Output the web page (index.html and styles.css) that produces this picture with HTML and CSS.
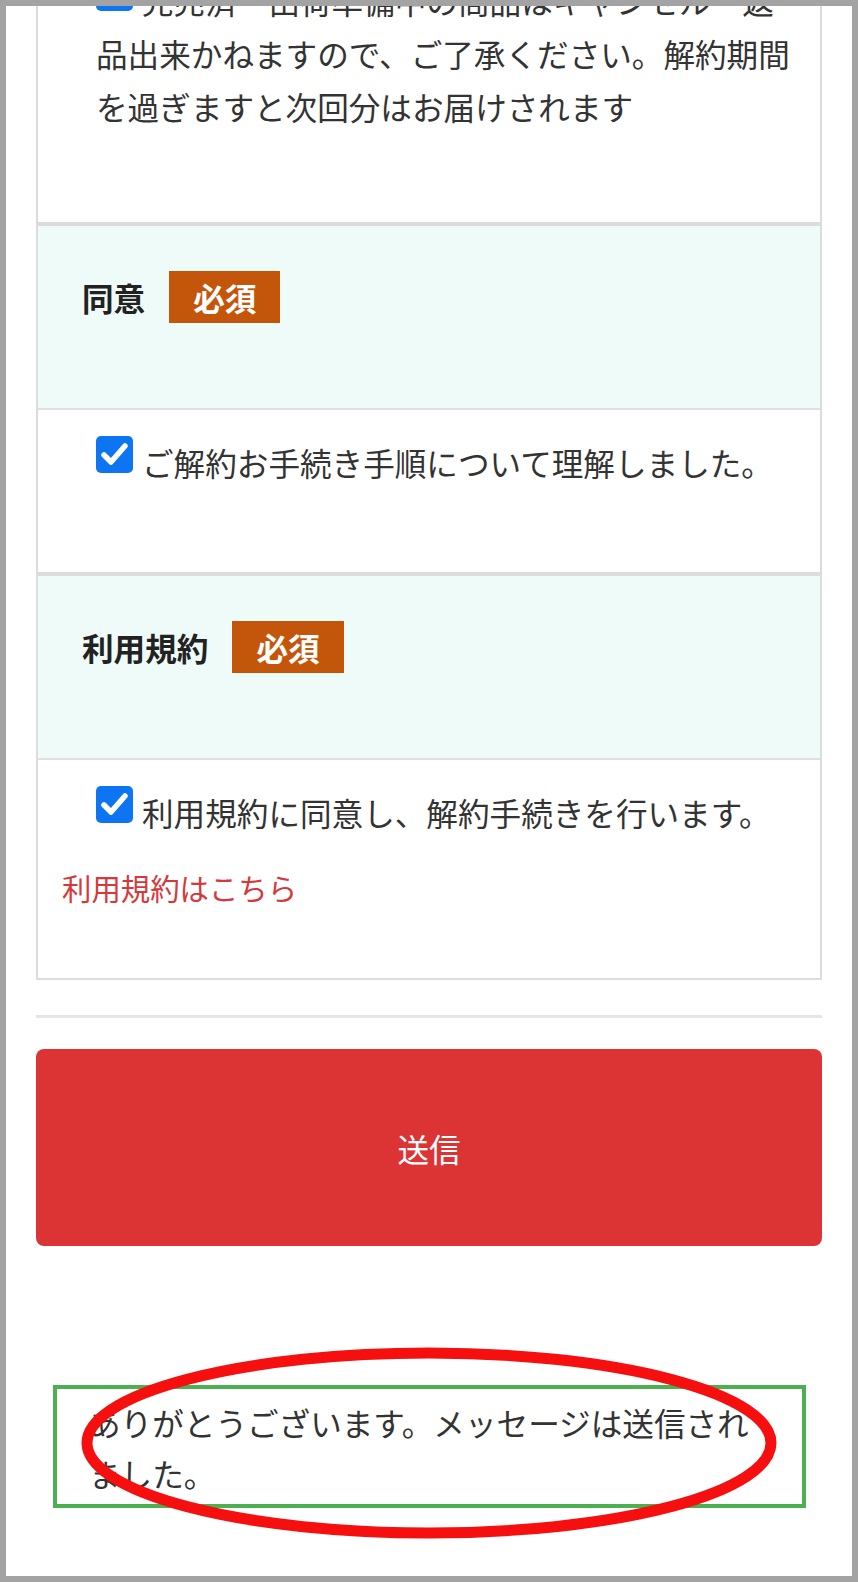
FILE: index.html
```html
<!DOCTYPE html>
<html lang="ja">
<head>
    <meta charset="UTF-8">
    <meta name="viewport" content="width=device-width, initial-scale=1.0">
    <title>解約お手続き</title>
    <link rel="stylesheet" href="styles.css">
</head>
<body>
    <div class="screen">
        <div class="content">
            <div class="form-table">
                <div class="row-body first">
                    <p class="check-text"><svg class="check" viewBox="0 0 37 37"><rect width="37" height="37" rx="5"/><path d="M8 19 L15 26 L29 10"/></svg>完売済・出荷準備中の商品はキャンセル・返品出来かねますので、ご了承ください。解約期間を過ぎますと次回分はお届けされます</p>
                </div>

                <div class="row-head">
                    <span class="label">同意</span>
                    <span class="badge">必須</span>
                </div>
                <div class="row-body">
                    <p class="check-text"><svg class="check" viewBox="0 0 37 37"><rect width="37" height="37" rx="5"/><path d="M8 19 L15 26 L29 10"/></svg>ご解約お手続き手順について理解しました。</p>
                </div>

                <div class="row-head">
                    <span class="label">利用規約</span>
                    <span class="badge">必須</span>
                </div>
                <div class="row-body last">
                    <p class="check-text"><svg class="check" viewBox="0 0 37 37"><rect width="37" height="37" rx="5"/><path d="M8 19 L15 26 L29 10"/></svg>利用規約に同意し、解約手続きを行います。</p>
                    <a class="terms-link" href="#">利用規約はこちら</a>
                </div>
            </div>

            <hr class="divider">

            <button class="submit">送信</button>

            <div class="sent-message">ありがとうございます。メッセージは送信されました。</div>
        </div>

        <svg class="mark" viewBox="0 0 696 192"><ellipse cx="348" cy="96" rx="342" ry="90"/></svg>
    </div>
</body>
</html>
```

FILE: styles.css
```css
body { margin: 0; background: #fff; font-family: "Noto Sans CJK JP", "Noto Sans", sans-serif; }
.screen { position: relative; width: 858px; height: 1582px; box-sizing: border-box; border: 6px solid #a3a3a3; background: #fff; overflow: hidden; }
.content { margin-top: -58px; padding: 0 30px; }

.form-table { border: 2px solid #dcdcdc; border-top: none; }
.row-head { display: flex; align-items: center; gap: 24px; border-top: 4px solid #dcdcdc; background: #effbf8; padding: 45px 0 85px 44px; }
.label { font-size: 31.6px; font-weight: 700; color: #222; line-height: 52px; }
.badge { background: #c4560b; color: #fff; font-size: 31.6px; font-weight: 700; line-height: 52px; height: 52px; padding: 0 24px; }

.row-body { border-top: 2px solid #e0e0e0; padding: 26px 20px 83px 24px; }
.row-body.first { border-top: none; padding-bottom: 89px; }
.row-body.last { padding-bottom: 64px; }
.check-text { margin: 0 0 0 34px; font-size: 31.6px; line-height: 53px; color: #333; }
.check { display: inline-block; width: 37px; height: 37px; vertical-align: top; margin: 0 9px 0 0; }
.check rect { fill: #0d75f2; }
.check path { fill: none; stroke: #fff; stroke-width: 5.5; stroke-linecap: round; stroke-linejoin: round; }
.terms-link { display: block; margin-top: 22px; font-size: 29.4px; line-height: 53px; color: #d6393b; text-decoration: none; }

.divider { margin: 35px 0 0; border: none; height: 3px; background: #e5e5e5; }
.submit { display: block; width: 100%; height: 197px; margin-top: 31px; border: none; border-radius: 8px; background: #dc3434; color: #fff; font-family: inherit; font-size: 31.6px; }

.sent-message { margin: 139px 16px 0 17px; border: 4px solid #4caf50; padding: 8px 32px 5px; font-size: 31.6px; line-height: 51px; color: #333; }

.mark { position: absolute; left: 75px; top: 1341px; width: 696px; height: 192px; }
.mark ellipse { fill: none; stroke: #f50f0f; stroke-width: 11; }
```
